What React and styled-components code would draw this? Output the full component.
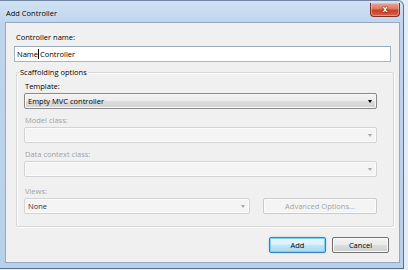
import React from "react";
import styled, { createGlobalStyle } from "styled-components";

const Global = createGlobalStyle`
  html, body { margin: 0; padding: 0; background: #dfe8f2; }
  body { font-family: "Open Sans", "Noto Sans", sans-serif; font-size: 7.5px; color: #000; }
  * { box-sizing: border-box; }
`;

const Page = styled.div`
  width: 408px;
  height: 270px;
  overflow: hidden;
  background: #e4ecf5;
`;

const Window = styled.div`
  width: 404px;
  height: 269px;
  display: flex;
  flex-direction: column;
  background: linear-gradient(180deg, #d0e1f3 0px, #bfd5ed 22px, #b9d0ea 100%);
  border-right: 1px solid #5d7290;
  border-bottom: 1px solid #5d7290;
  border-top: 1px solid #6f86a4;
  border-radius: 0 6px 0 0;
  padding: 0 3px 5px 5px;
`;

const TitleBar = styled.div`
  height: 21px;
  display: flex;
  align-items: flex-start;
  justify-content: space-between;
`;

const Title = styled.span`
  margin-top: 6px;
  margin-left: 1px;
  font-size: 7.5px;
  line-height: 12px;
  color: #000;
  text-shadow: 0 0 6px rgba(255,255,255,0.9);
`;

const CloseButton = styled.div`
  width: 30px;
  height: 14px;
  margin-top: 2px;
  border: 1px solid #7d2f2a;
  border-top: none;
  border-radius: 0 0 4px 4px;
  background: linear-gradient(180deg, #eca597 0%, #dc7763 45%, #c8412b 55%, #d45f47 100%);
  box-shadow: inset 0 0 0 1px rgba(255,200,190,0.5);
  display: flex;
  align-items: center;
  justify-content: center;
  color: #fff;
  font-family: "DejaVu Sans", sans-serif;
  font-weight: bold;
  font-size: 8px;
  line-height: 1;
  text-shadow: 0 0 1px #4a0f08, 0 0 2px #4a0f08;
`;

const Client = styled.div`
  flex: 1;
  background: #f0f0f0;
  border: 1px solid #93a9c4;
  padding: 8px 5px 0 8px;
  display: flex;
  flex-direction: column;
`;

const Label = styled.div`
  font-size: 7.5px;
  line-height: 12px;
  color: ${(p) => (p.$disabled ? "#a2a2a2" : "#000")};
  margin-left: ${(p) => p.$indent || 0}px;
`;

const NameBox = styled.div`
  height: 16px;
  margin-top: 3px;
  margin-right: 3px;
  background: #fff;
  border: 1px solid #a6b6c9;
  border-top-color: #9aaabd;
  display: flex;
  align-items: center;
  padding-left: 2px;
  font-size: 7.5px;
  color: #000;
`;

const Caret = styled.span`
  display: inline-block;
  width: 1px;
  height: 10px;
  background: #000;
  margin: 0 0.5px;
`;

const Group = styled.fieldset`
  margin: 4px 0 0 2px;
  padding: 0;
  border: 1px solid #d7d7d7;
  box-shadow: inset 1px 1px 0 #fff, 1px 1px 0 #fff;
  border-radius: 2px;
  min-width: 0;
`;

const Legend = styled.legend`
  margin-left: 2px;
  padding: 0 1px;
  font-size: 7.5px;
  line-height: 12px;
  color: #000;
`;

const GroupBody = styled.div`
  padding: 2px 16px 12px 7px;
  display: flex;
  flex-direction: column;
`;

const Row = styled.div`
  display: flex;
  flex-direction: column;
  margin-top: ${(p) => p.$top || 0}px;
`;

const RowLine = styled.div`
  display: flex;
  justify-content: space-between;
  align-items: center;
`;

const Select = styled.div`
  height: 16px;
  margin-top: 1px;
  width: ${(p) => (p.$width ? p.$width + "px" : "100%")};
  display: flex;
  align-items: center;
  justify-content: space-between;
  padding: 0 4px 0 3px;
  border-radius: 2px;
  font-size: 7.5px;
  color: ${(p) => (p.$disabled ? "#333" : "#000")};
  border: 1px solid ${(p) => (p.$disabled ? "#d3d3d3" : "#8a8a8a")};
  background: ${(p) =>
    p.$disabled
      ? "#f4f4f4"
      : "linear-gradient(180deg, #f3f3f3 0%, #ebebeb 48%, #dddddd 52%, #d2d2d2 100%)"};
  box-shadow: ${(p) => (p.$disabled ? "inset 0 0 0 1px #fbfbfb" : "inset 0 0 0 1px #f8f8f8")};
`;

const Arrow = styled.span`
  width: 0;
  height: 0;
  border-left: 2.5px solid transparent;
  border-right: 2.5px solid transparent;
  border-top: 3px solid ${(p) => (p.$disabled ? "#a8a8a8" : "#000")};
  margin-top: 1px;
`;

const Button = styled.div`
  width: ${(p) => p.$width}px;
  height: 16px;
  display: flex;
  align-items: center;
  justify-content: center;
  border-radius: 2px;
  font-size: 7.5px;
  color: ${(p) => (p.$disabled ? "#a3a3a3" : "#000")};
  border: 1px solid
    ${(p) => (p.$disabled ? "#cbcbcb" : p.$default ? "#3c7fb1" : "#707070")};
  background: ${(p) =>
    p.$disabled
      ? "#f4f4f4"
      : p.$default
      ? "linear-gradient(180deg, #eaf6fd 0%, #d9f0fc 48%, #bee6fd 52%, #a7d9f5 100%)"
      : "linear-gradient(180deg, #f2f2f2 0%, #ebebeb 48%, #dddddd 52%, #cfcfcf 100%)"};
  box-shadow: ${(p) =>
    p.$default
      ? "inset 0 0 0 1px #7ed1f5, 0 0 2px rgba(80,170,230,0.5)"
      : "inset 0 0 0 1px #fbfbfb"};
`;

const ButtonBar = styled.div`
  display: flex;
  justify-content: flex-end;
  gap: 6px;
  margin-top: 10px;
  margin-right: 5px;
`;

export default function App() {
  return (
    <Page>
      <Global />
      <Window>
        <TitleBar>
          <Title>Add Controller</Title>
          <CloseButton>x</CloseButton>
        </TitleBar>
        <Client>
          <Label $indent={2}>Controller name:</Label>
          <NameBox>
            Name<Caret />Controller
          </NameBox>
          <Group>
            <Legend>Scaffolding options</Legend>
            <GroupBody>
              <Row>
                <Label $indent={1}>Template:</Label>
                <Select>
                  Empty MVC controller
                  <Arrow />
                </Select>
              </Row>
              <Row $top={5}>
                <Label $indent={1} $disabled>Model class:</Label>
                <Select $disabled>
                  <span />
                  <Arrow $disabled />
                </Select>
              </Row>
              <Row $top={5}>
                <Label $indent={1} $disabled>Data context class:</Label>
                <Select $disabled>
                  <span />
                  <Arrow $disabled />
                </Select>
              </Row>
              <Row $top={8}>
                <Label $indent={1} $disabled>Views:</Label>
                <RowLine>
                  <Select $disabled $width={226}>
                    None
                    <Arrow $disabled />
                  </Select>
                  <Button $disabled $width={114}>Advanced Options...</Button>
                </RowLine>
              </Row>
            </GroupBody>
          </Group>
          <ButtonBar>
            <Button $default $width={57}>Add</Button>
            <Button $width={57}>Cancel</Button>
          </ButtonBar>
        </Client>
      </Window>
    </Page>
  );
}
